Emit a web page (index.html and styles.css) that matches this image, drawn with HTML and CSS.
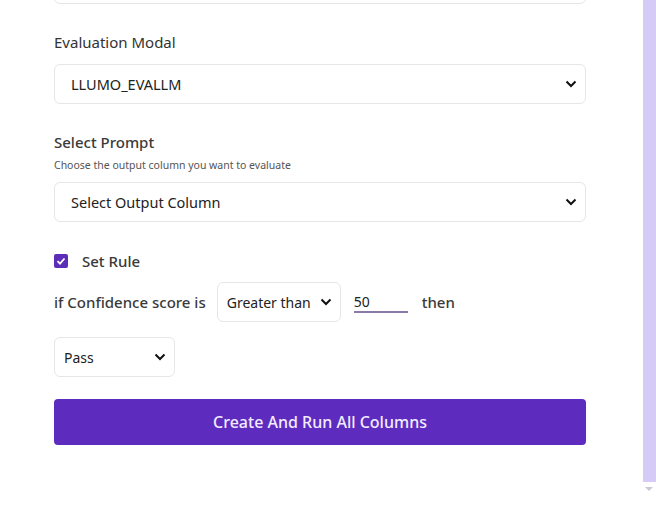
FILE: index.html
```html
<!DOCTYPE html>
<html lang="en">
<head>
    <meta charset="UTF-8">
    <title>Create Evaluation</title>
    <link rel="stylesheet" href="styles.css">
</head>
<body>
    <div class="page">
        <div class="panel">
            <div class="field-box top-box"></div>

            <div class="group">
                <div class="label">Evaluation Modal</div>
                <div class="field-box">
                    <span>LLUMO_EVALLM</span>
                    <svg class="chev" width="12" height="8" viewBox="0 0 12 8"><polyline points="1.5,1.5 6,6 10.5,1.5" fill="none" stroke="#111" stroke-width="2"/></svg>
                </div>
            </div>

            <div class="group">
                <div class="label strong">Select Prompt</div>
                <div class="hint">Choose the output column you want to evaluate</div>
                <div class="field-box">
                    <span>Select Output Column</span>
                    <svg class="chev" width="12" height="8" viewBox="0 0 12 8"><polyline points="1.5,1.5 6,6 10.5,1.5" fill="none" stroke="#111" stroke-width="2"/></svg>
                </div>
            </div>

            <div class="group rule-group">
                <div class="check-row">
                    <span class="checkbox">
                        <svg width="14" height="14" viewBox="0 0 14 14"><polyline points="3.5,7.2 6,9.6 10.5,4.5" fill="none" stroke="#fff" stroke-width="1.8"/></svg>
                    </span>
                    <span class="label strong">Set Rule</span>
                </div>
                <div class="rule-row">
                    <span class="label strong">if Confidence score is</span>
                    <div class="field-box small cond">
                        <span>Greater than</span>
                        <svg class="chev" width="12" height="8" viewBox="0 0 12 8"><polyline points="1.5,1.5 6,6 10.5,1.5" fill="none" stroke="#111" stroke-width="2"/></svg>
                    </div>
                    <span class="score">50</span>
                    <span class="label strong">then</span>
                </div>
                <div class="field-box small result">
                    <span>Pass</span>
                    <svg class="chev" width="12" height="8" viewBox="0 0 12 8"><polyline points="1.5,1.5 6,6 10.5,1.5" fill="none" stroke="#111" stroke-width="2"/></svg>
                </div>
            </div>

            <button class="run-btn">Create And Run All Columns</button>
        </div>
        <div class="scrollbar">
            <div class="thumb"></div>
            <div class="arrow"></div>
        </div>
    </div>
</body>
</html>
```

FILE: styles.css
```css
body {
    margin: 0;
    font-family: "Noto Sans", "Open Sans", sans-serif;
    background-color: #ffffff;
    color: #333;
    overflow: hidden;
}
.page {
    display: flex;
    height: 513px;
}
.panel {
    flex: 1;
    padding: 0 56px 0 54px;
}
.field-box {
    display: flex;
    align-items: center;
    justify-content: space-between;
    height: 40px;
    box-sizing: border-box;
    padding: 0 8px 0 16px;
    border: 1px solid #e6e6e6;
    border-radius: 6px;
    font-size: 14.5px;
    color: #222;
}
.top-box {
    margin-top: -36px;
}
.group {
    margin-top: 28px;
}
.rule-group {
    margin-top: 29px;
}
.label {
    font-size: 15px;
    line-height: 20px;
    color: #333;
    margin-bottom: 12px;
}
.strong {
    font-weight: 500;
    color: #3a3a3a;
}
.group .label.strong + .hint {
    margin-top: -6px;
}
.hint {
    font-size: 10.5px;
    line-height: 14px;
    color: #555;
    margin-bottom: 10px;
}
.check-row {
    display: flex;
    align-items: center;
    height: 20px;
}
.check-row .label {
    margin: 0;
}
.checkbox {
    width: 14px;
    height: 14px;
    border-radius: 2px;
    background-color: #5c2db8;
    margin-right: 14px;
    display: flex;
}
.rule-row {
    display: flex;
    align-items: center;
    margin-top: 11px;
}
.rule-row .label {
    margin: 0;
}
.field-box.small {
    padding: 0 8px 0 9px;
    font-size: 14px;
}
.cond {
    width: 124px;
    margin: 0 13px 0 11px;
}
.score {
    width: 54px;
    box-sizing: border-box;
    font-size: 14px;
    line-height: 18px;
    border-bottom: 2px solid #8b7aa8;
    margin-right: 14px;
    margin-top: 2px;
    color: #222;
}
.result {
    width: 121px;
    margin-top: 15px;
}
.run-btn {
    display: block;
    width: 100%;
    height: 46px;
    margin-top: 22px;
    border: none;
    border-radius: 4px;
    background-color: #5e2bbf;
    color: #f3ecff;
    font-family: inherit;
    font-size: 16px;
    font-weight: 500;
}
.scrollbar {
    width: 14px;
    display: flex;
    flex-direction: column;
    align-items: center;
}
.thumb {
    width: 13px;
    height: 482px;
    background-color: #d6cbf6;
}
.arrow {
    margin-top: 5px;
    width: 0;
    height: 0;
    border-left: 4px solid transparent;
    border-right: 4px solid transparent;
    border-top: 4px solid #c9c9d6;
}
```
